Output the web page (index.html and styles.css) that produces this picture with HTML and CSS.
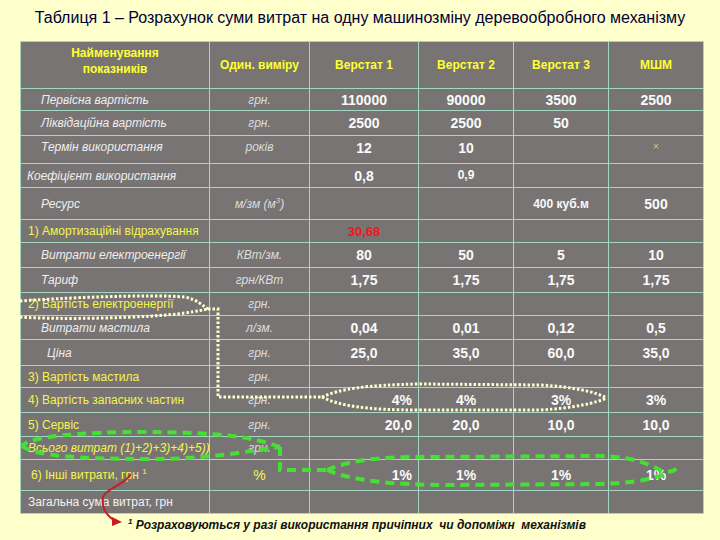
FILE: index.html
```html
<!DOCTYPE html>
<html lang="uk">
<head>
<meta charset="utf-8">
<title>Таблиця 1</title>
<link rel="stylesheet" href="styles.css">
</head>
<body>
<div class="page">
  <h1 class="title">Таблиця 1 – Розрахунок суми витрат на одну машинозміну деревообробного механізму</h1>
  <table class="grid">
    <colgroup>
      <col class="c-name"><col class="c-unit"><col class="c-v1"><col class="c-v"><col class="c-v"><col class="c-v">
    </colgroup>
    <thead>
      <tr class="h47">
        <th class="namehead">Найменування<br>показників</th>
        <th>Один. виміру</th>
        <th>Верстат 1</th>
        <th>Верстат 2</th>
        <th>Верстат 3</th>
        <th>МШМ</th>
      </tr>
    </thead>
    <tbody>
      <tr class="h22"><td class="lbl">Первісна вартість</td><td class="unit">грн.</td><td class="val">110000</td><td class="val">90000</td><td class="val">3500</td><td class="val">2500</td></tr>
      <tr class="h25"><td class="lbl">Ліквідаційна вартість</td><td class="unit">грн.</td><td class="val">2500</td><td class="val">2500</td><td class="val">50</td><td></td></tr>
      <tr class="h28"><td class="lbl top">Термін використання</td><td class="unit top">років</td><td class="val top">12</td><td class="val top">10</td><td></td><td class="val cross top">×</td></tr>
      <tr class="h24"><td class="lbl coef">Коефіцієнт використання</td><td></td><td class="val">0,8</td><td class="val small top">0,9</td><td></td><td></td></tr>
      <tr class="h32"><td class="lbl">Ресурс</td><td class="unit">м/зм (м<sup>3</sup>)</td><td></td><td></td><td class="val mid">400 куб.м</td><td class="val">500</td></tr>
      <tr class="h23"><td class="lbl num">1) Амортизаційні відрахування</td><td></td><td class="val red">30,68</td><td></td><td></td><td></td></tr>
      <tr class="h25"><td class="lbl">Витрати електроенергії</td><td class="unit">КВт/зм.</td><td class="val">80</td><td class="val">50</td><td class="val">5</td><td class="val">10</td></tr>
      <tr class="h25"><td class="lbl">Тариф</td><td class="unit">грн/КВт</td><td class="val">1,75</td><td class="val">1,75</td><td class="val">1,75</td><td class="val">1,75</td></tr>
      <tr class="h23"><td class="lbl num">2) Вартість електроенергії</td><td class="unit">грн.</td><td></td><td></td><td></td><td></td></tr>
      <tr class="h24"><td class="lbl">Витрати мастила</td><td class="unit">л/зм.</td><td class="val">0,04</td><td class="val">0,01</td><td class="val">0,12</td><td class="val">0,5</td></tr>
      <tr class="h26"><td class="lbl deep">Ціна</td><td class="unit">грн.</td><td class="val">25,0</td><td class="val">35,0</td><td class="val">60,0</td><td class="val">35,0</td></tr>
      <tr class="h22"><td class="lbl num">3) Вартість мастила</td><td class="unit">грн.</td><td></td><td></td><td></td><td></td></tr>
      <tr class="h25"><td class="lbl num">4) Вартість запасних частин</td><td class="unit">грн.</td><td class="val right">4%</td><td class="val">4%</td><td class="val">3%</td><td class="val">3%</td></tr>
      <tr class="h24"><td class="lbl num">5) Сервіс</td><td class="unit">грн.</td><td class="val right">20,0</td><td class="val">20,0</td><td class="val">10,0</td><td class="val">10,0</td></tr>
      <tr class="h23"><td class="lbl num ital">Всього витрат (1)+2)+3)+4)+5))</td><td class="unit">грн.</td><td></td><td></td><td></td><td></td></tr>
      <tr class="h31"><td class="lbl num six">6) Інші витрати, грн <sup>1</sup></td><td class="unit pct">%</td><td class="val right">1%</td><td class="val">1%</td><td class="val">1%</td><td class="val">1%</td></tr>
      <tr class="h23"><td class="lbl total">Загальна сума витрат, грн</td><td></td><td></td><td></td><td></td><td></td></tr>
    </tbody>
  </table>
  <p class="note"><sup>1</sup> Розраховуються у разі використання причіпних&nbsp; чи допоміжн&nbsp; механізмів</p>

  <svg class="marks" width="720" height="540" viewBox="0 0 720 540" aria-hidden="true">
    <g fill="none" stroke="#ffffcc" stroke-width="3" stroke-dasharray="2.5 2">
      <path d="M20,301 C60,298 150,294 185,297 C198,300 203,306 208,309"/>
      <path d="M20,317 C60,320 150,318 185,313 C198,311 203,310 208,309"/>
      <path d="M208,309 L218,309 L218,397 L322,397"/>
      <path d="M322,397 C340,389 365,385 420,384 L540,385 C575,387 595,392 607,398"/>
      <path d="M322,397 C340,406 365,410 420,410 L540,410 C575,408 595,403 607,398"/>
    </g>
    <g fill="none" stroke="#44e033" stroke-width="4" stroke-dasharray="9 6">
      <path d="M280,447 C250,436 220,433 150,432 C80,432 30,436 22,446"/>
      <path d="M22,446 C35,456 80,459 150,459 C210,459 240,452 280,447"/>
      <path d="M280,447 L280,470 L327,470"/>
      <path d="M327,470 C350,460 380,457 420,457 L600,456 C630,457 645,462 660,470 C668,474 676,471 681,465"/>
      <path d="M327,470 C350,480 390,485 450,485 L600,484 C630,483 650,480 665,474"/>
    </g>
    <g fill="none" stroke="#c81e1e" stroke-width="2">
      <path d="M131,474 C125,485 106,488 103,497 C101,507 107,517 116,521"/>
    </g>
    <path d="M112,517 L122,522 L112,526 Z" fill="#c81e1e"/>
  </svg>
</div>
</body>
</html>
```
FILE: styles.css
```css
html, body {
  margin: 0;
  padding: 0;
  background: #ffffcc;
}

.page {
  position: relative;
  width: 720px;
  height: 540px;
  padding: 9px 0 0 20px;
  box-sizing: border-box;
  font-family: "Liberation Sans", Arial, sans-serif;
}

.title {
  margin: 0 0 14px -20px;
  width: 720px;
  text-align: center;
  font-size: 16px;
  line-height: 18px;
  font-weight: normal;
  color: #000033;
}

.grid {
  border-collapse: collapse;
  table-layout: fixed;
  width: 683px;
  background: #787474;
}

.c-name { width: 189px; }
.c-unit { width: 100px; }
.c-v1 { width: 109px; }
.c-v { width: 95px; }

.grid th,
.grid td {
  border: 1px solid #a4d8c2;
  padding: 0;
  vertical-align: middle;
  box-sizing: border-box;
}

.grid th {
  color: #ffff33;
  font-size: 12px;
  font-weight: bold;
  line-height: 16px;
  text-align: center;
}

.grid th.namehead {
  padding-bottom: 8px;
}

.h47 th { height: 47px; }
.h22 td { height: 22px; }
.h23 td { height: 23px; }
.h24 td { height: 24px; }
.h25 td { height: 25px; }
.h26 td { height: 26px; }
.h28 td { height: 28px; }
.h31 td { height: 31px; }
.h32 td { height: 32px; }

.lbl {
  padding-left: 20px !important;
  font-size: 12px;
  font-style: italic;
  color: #eeeeee;
  white-space: nowrap;
}

.lbl.coef { padding-left: 6px !important; }
.lbl.deep { padding-left: 26px !important; }

.lbl.num {
  padding-left: 7px !important;
  font-style: normal;
  color: #f4f44a;
}

.lbl.num.ital { font-style: italic; }
.lbl.num.six { padding-left: 10px !important; }

.lbl.total {
  padding-left: 7px !important;
  font-style: normal;
  color: #f2f2f2;
}

.lbl sup,
.unit sup {
  font-size: 8px;
  line-height: 0;
}

.unit {
  text-align: center;
  font-size: 12px;
  font-style: italic;
  color: #dddddd;
}

.unit.pct {
  font-style: normal;
  font-size: 14px;
  color: #f4f44a;
}

.val {
  text-align: center;
  font-size: 14px;
  font-weight: bold;
  color: #fafafa;
}

.val.small { font-size: 12px; }
.val.mid { font-size: 12px; }
.val.right { text-align: right; padding-right: 6px !important; }
.val.red { color: #f01818; font-size: 13px; }
.val.cross { color: #c8c67a; font-size: 11px; font-weight: normal; }

.top { vertical-align: top !important; padding-top: 4px !important; }

.note {
  margin: 4px 0 0 108px;
  font-size: 12px;
  font-weight: bold;
  font-style: italic;
  color: #111111;
  line-height: 14px;
}

.note sup {
  font-size: 8px;
  line-height: 0;
}

.marks {
  position: absolute;
  left: 0;
  top: 0;
  pointer-events: none;
}
```
